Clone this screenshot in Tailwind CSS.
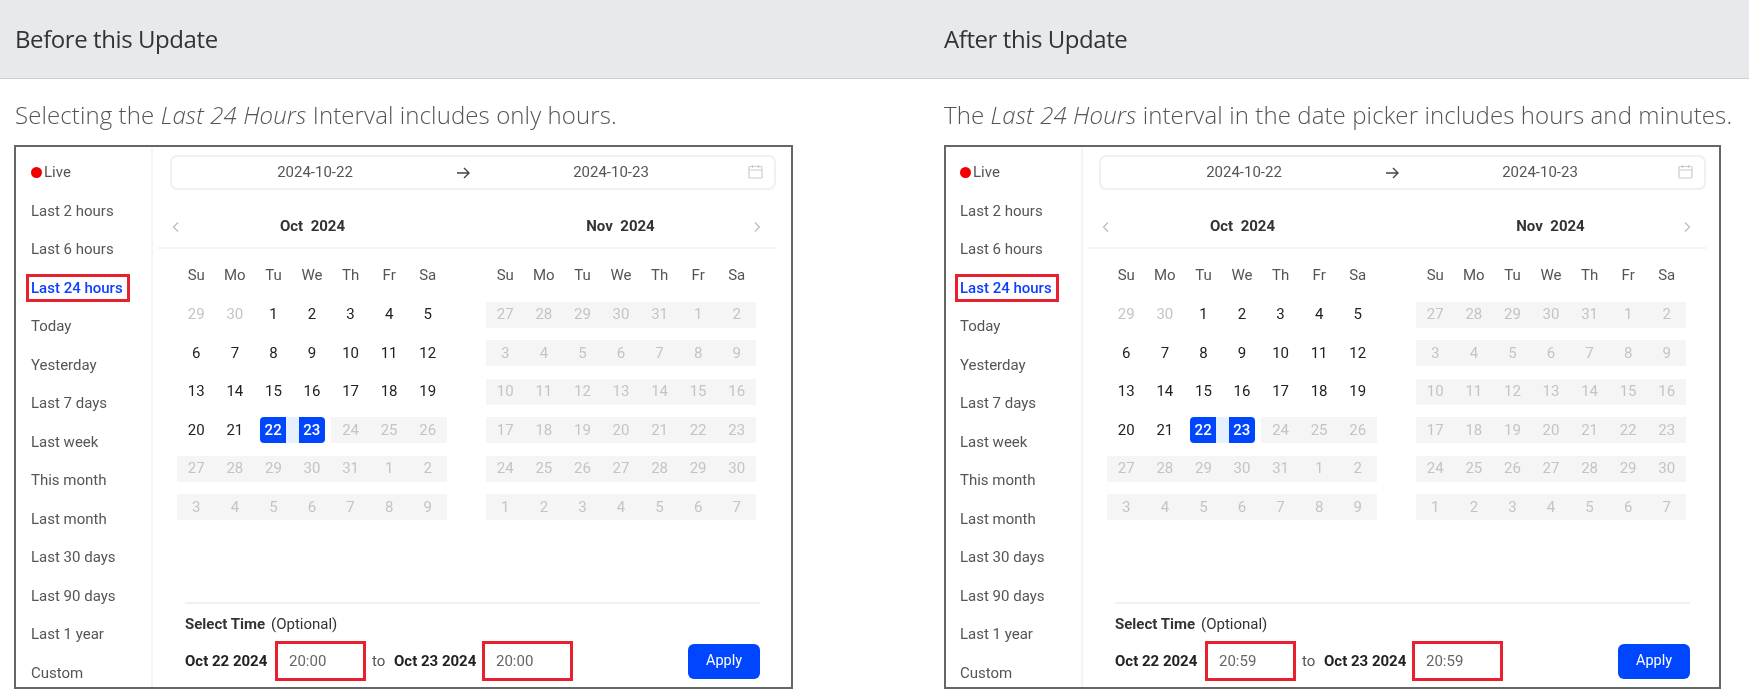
<!DOCTYPE html>
<html>
<head>
<meta charset="utf-8">
<script src="https://cdn.jsdelivr.net/npm/@tailwindcss/browser@4"></script>
</head>
<body class="bg-white overflow-hidden">
<div class="w-[1749px] h-[696px] grid grid-cols-[929px_820px] font-['Open_Sans',sans-serif] blur-[0.4px]">

<!-- BEFORE -->
<section class="flex flex-col">
  <h2 class="h-[79px] bg-[#e7e9ed] border-b border-[#cfcfcf] pl-[15px] flex items-center text-[24px] tracking-[-0.42px] text-[#333] font-normal">Before this Update</h2>
  <p class="h-[66px] pl-[15px] pt-[18px] text-[24px] leading-[36px] tracking-[0.1px] font-light text-[#555] whitespace-nowrap">Selecting the <i>Last 24 Hours</i> Interval includes only hours.</p>
  <div class="ml-[14px] w-[779px] h-[544px] border-2 border-[#666] flex overflow-hidden font-['Roboto',sans-serif] text-[15px]">
    <nav class="w-[137px] shrink-0 border-r-2 border-[#f4f4f4] pl-[15px] pt-[6px] flex flex-col text-[#555] *:h-[38.5px] *:shrink-0 *:flex *:items-center">
      <div><span class="size-[11px] rounded-full bg-[#f00000] mr-[2px]"></span>Live</div>
      <div>Last 2 hours</div>
      <div>Last 6 hours</div>
      <div class="relative font-medium text-[#0f3dff]"><span class="absolute -left-[5px] top-[5px] w-[104px] h-[28px] border-[3px] border-[#e8202f]"></span>Last 24 hours</div>
      <div>Today</div>
      <div>Yesterday</div>
      <div>Last 7 days</div>
      <div>Last week</div>
      <div>This month</div>
      <div>Last month</div>
      <div>Last 30 days</div>
      <div>Last 90 days</div>
      <div>Last 1 year</div>
      <div>Custom</div>
    </nav>
    <main class="flex-1 flex flex-col pl-[5px] pt-[8px]">
      <div class="ml-[12px] w-[606px] h-[35px] border-2 border-[#f0f0f0] rounded-[7px] grid grid-cols-[290px_1fr] items-center text-[#555] relative">
        <span class="text-center w-[286px]">2024-10-22</span>
        <span class="text-center w-[298px]">2024-10-23</span>
        <svg class="absolute left-[283px] top-[8px] size-[16px]" viewBox="0 0 16 16" fill="none" stroke="#444" stroke-width="1.4"><path d="M2 8h12M9 3l5 5-5 5"/></svg>
        <svg class="absolute right-[11px] top-[7px] size-[15px]" viewBox="0 0 15 15" fill="none" stroke="#ccc" stroke-width="1.2"><rect x="1" y="2.5" width="13" height="11.5" rx="1"/><path d="M1 6h13M4.5 1v3M10.5 1v3"/></svg>
      </div>
      <div class="relative h-[59px] border-b-2 border-[#f4f4f4] flex items-center w-[618px] font-bold text-[#333] pt-[16px]">
        <svg class="absolute left-[13px] top-[32px] size-[10px]" viewBox="0 0 10 10" fill="none" stroke="#bbb" stroke-width="1.2"><path d="M7 0.5L2.5 5 7 9.5"/></svg>
        <span class="w-[309px] text-center whitespace-pre">Oct  2024</span>
        <span class="w-[307px] text-center whitespace-pre">Nov  2024</span>
        <svg class="absolute right-[14px] top-[32px] size-[10px]" viewBox="0 0 10 10" fill="none" stroke="#bbb" stroke-width="1.2"><path d="M3 0.5L7.5 5 3 9.5"/></svg>
      </div>
      <div class="flex gap-[39px] pl-[19px]">
        <div class="w-[270px]">
          <div class="grid grid-cols-7 h-[52.5px] items-center text-center text-[#555]"><span>Su</span><span>Mo</span><span>Tu</span><span>We</span><span>Th</span><span>Fr</span><span>Sa</span></div>
          <div class="grid grid-cols-7 gap-y-[12.5px] text-[#222] *:h-[26px] *:flex *:items-center *:justify-center">
            <span class="text-[#c4c4c4]">29</span><span class="text-[#c4c4c4]">30</span><span>1</span><span>2</span><span>3</span><span>4</span><span>5</span>
            <span>6</span><span>7</span><span>8</span><span>9</span><span>10</span><span>11</span><span>12</span>
            <span>13</span><span>14</span><span>15</span><span>16</span><span>17</span><span>18</span><span>19</span>
            <span>20</span><span>21</span>
            <span class="bg-[linear-gradient(90deg,transparent_50%,#e6f0ff_50%)] relative font-medium text-white"><b class="absolute inset-y-0 left-[6px] w-[26px] rounded-l-[4px] bg-[#0046ff] flex items-center justify-center font-medium">22</b></span>
            <span class="bg-[linear-gradient(90deg,#e6f0ff_50%,transparent_50%)] relative font-medium text-white"><b class="absolute inset-y-0 left-[6px] w-[26px] rounded-r-[4px] bg-[#0046ff] flex items-center justify-center font-medium">23</b></span>
            <span class="bg-[#f5f5f5] text-[#c4c4c4]">24</span><span class="bg-[#f5f5f5] text-[#c4c4c4]">25</span><span class="bg-[#f5f5f5] text-[#c4c4c4]">26</span>
          </div>
          <div class="grid grid-cols-7 gap-y-[12.5px] mt-[12.5px] text-[#c4c4c4] *:h-[26px] *:flex *:items-center *:justify-center *:bg-[#f5f5f5]">
            <span>27</span><span>28</span><span>29</span><span>30</span><span>31</span><span>1</span><span>2</span>
            <span>3</span><span>4</span><span>5</span><span>6</span><span>7</span><span>8</span><span>9</span>
          </div>
        </div>
        <div class="w-[270px]">
          <div class="grid grid-cols-7 h-[52.5px] items-center text-center text-[#555]"><span>Su</span><span>Mo</span><span>Tu</span><span>We</span><span>Th</span><span>Fr</span><span>Sa</span></div>
          <div class="grid grid-cols-7 gap-y-[12.5px] text-[#c4c4c4] *:h-[26px] *:flex *:items-center *:justify-center *:bg-[#f5f5f5]">
            <span>27</span><span>28</span><span>29</span><span>30</span><span>31</span><span>1</span><span>2</span>
            <span>3</span><span>4</span><span>5</span><span>6</span><span>7</span><span>8</span><span>9</span>
            <span>10</span><span>11</span><span>12</span><span>13</span><span>14</span><span>15</span><span>16</span>
            <span>17</span><span>18</span><span>19</span><span>20</span><span>21</span><span>22</span><span>23</span>
            <span>24</span><span>25</span><span>26</span><span>27</span><span>28</span><span>29</span><span>30</span>
            <span>1</span><span>2</span><span>3</span><span>4</span><span>5</span><span>6</span><span>7</span>
          </div>
        </div>
      </div>
      <div class="mt-auto ml-[27px] w-[575px] border-t-2 border-[#f0f0f0] pt-[10px] pb-[6px]">
        <div class="h-[20px] flex items-center text-[#333]"><b class="font-bold mr-[6px]">Select Time</b>(Optional)</div>
        <div class="flex items-center mt-[7px] h-[40px]">
          <b class="font-bold text-[#222] w-[90px]">Oct 22 2024</b>
          <span class="w-[91px] h-[40px] border-[3px] border-[#e8202f] pl-[11px] flex items-center text-[#666]">20:00</span>
          <span class="text-[#555] ml-[6px] w-[22px]">to</span>
          <b class="font-bold text-[#222] w-[88px]">Oct 23 2024</b>
          <span class="w-[91px] h-[40px] border-[3px] border-[#e8202f] pl-[11px] flex items-center text-[#666]">20:00</span>
          <button class="ml-auto w-[72px] h-[35px] rounded-[6px] bg-[#0046ff] text-white text-[14.5px]">Apply</button>
        </div>
      </div>
    </main>
  </div>
</section>

<!-- AFTER -->
<section class="flex flex-col">
  <h2 class="h-[79px] bg-[#e7e9ed] border-b border-[#cfcfcf] pl-[15px] flex items-center text-[24px] tracking-[-0.42px] text-[#333] font-normal">After this Update</h2>
  <p class="h-[66px] pl-[15px] pt-[18px] text-[24px] leading-[36px] tracking-[0.1px] font-light text-[#555] whitespace-nowrap">The <i>Last 24 Hours</i> interval in the date picker includes hours and minutes.</p>
  <div class="ml-[15px] w-[777px] h-[544px] border-2 border-[#666] flex overflow-hidden font-['Roboto',sans-serif] text-[15px]">
    <nav class="w-[137px] shrink-0 border-r-2 border-[#f4f4f4] pl-[14px] pt-[6px] flex flex-col text-[#555] *:h-[38.5px] *:shrink-0 *:flex *:items-center">
      <div><span class="size-[11px] rounded-full bg-[#f00000] mr-[2px]"></span>Live</div>
      <div>Last 2 hours</div>
      <div>Last 6 hours</div>
      <div class="relative font-medium text-[#0f3dff]"><span class="absolute -left-[5px] top-[5px] w-[104px] h-[28px] border-[3px] border-[#e8202f]"></span>Last 24 hours</div>
      <div>Today</div>
      <div>Yesterday</div>
      <div>Last 7 days</div>
      <div>Last week</div>
      <div>This month</div>
      <div>Last month</div>
      <div>Last 30 days</div>
      <div>Last 90 days</div>
      <div>Last 1 year</div>
      <div>Custom</div>
    </nav>
    <main class="flex-1 flex flex-col pl-[5px] pt-[8px]">
      <div class="ml-[11px] w-[607px] h-[35px] border-2 border-[#f0f0f0] rounded-[7px] grid grid-cols-[290px_1fr] items-center text-[#555] relative">
        <span class="text-center w-[286px]">2024-10-22</span>
        <span class="text-center w-[298px]">2024-10-23</span>
        <svg class="absolute left-[283px] top-[8px] size-[16px]" viewBox="0 0 16 16" fill="none" stroke="#444" stroke-width="1.4"><path d="M2 8h12M9 3l5 5-5 5"/></svg>
        <svg class="absolute right-[11px] top-[7px] size-[15px]" viewBox="0 0 15 15" fill="none" stroke="#ccc" stroke-width="1.2"><rect x="1" y="2.5" width="13" height="11.5" rx="1"/><path d="M1 6h13M4.5 1v3M10.5 1v3"/></svg>
      </div>
      <div class="relative h-[59px] border-b-2 border-[#f4f4f4] flex items-center w-[618px] font-bold text-[#333] pt-[16px]">
        <svg class="absolute left-[13px] top-[32px] size-[10px]" viewBox="0 0 10 10" fill="none" stroke="#bbb" stroke-width="1.2"><path d="M7 0.5L2.5 5 7 9.5"/></svg>
        <span class="w-[309px] text-center whitespace-pre">Oct  2024</span>
        <span class="w-[307px] text-center whitespace-pre">Nov  2024</span>
        <svg class="absolute right-[14px] top-[32px] size-[10px]" viewBox="0 0 10 10" fill="none" stroke="#bbb" stroke-width="1.2"><path d="M3 0.5L7.5 5 3 9.5"/></svg>
      </div>
      <div class="flex gap-[39px] pl-[19px]">
        <div class="w-[270px]">
          <div class="grid grid-cols-7 h-[52.5px] items-center text-center text-[#555]"><span>Su</span><span>Mo</span><span>Tu</span><span>We</span><span>Th</span><span>Fr</span><span>Sa</span></div>
          <div class="grid grid-cols-7 gap-y-[12.5px] text-[#222] *:h-[26px] *:flex *:items-center *:justify-center">
            <span class="text-[#c4c4c4]">29</span><span class="text-[#c4c4c4]">30</span><span>1</span><span>2</span><span>3</span><span>4</span><span>5</span>
            <span>6</span><span>7</span><span>8</span><span>9</span><span>10</span><span>11</span><span>12</span>
            <span>13</span><span>14</span><span>15</span><span>16</span><span>17</span><span>18</span><span>19</span>
            <span>20</span><span>21</span>
            <span class="bg-[linear-gradient(90deg,transparent_50%,#e6f0ff_50%)] relative font-medium text-white"><b class="absolute inset-y-0 left-[6px] w-[26px] rounded-l-[4px] bg-[#0046ff] flex items-center justify-center font-medium">22</b></span>
            <span class="bg-[linear-gradient(90deg,#e6f0ff_50%,transparent_50%)] relative font-medium text-white"><b class="absolute inset-y-0 left-[6px] w-[26px] rounded-r-[4px] bg-[#0046ff] flex items-center justify-center font-medium">23</b></span>
            <span class="bg-[#f5f5f5] text-[#c4c4c4]">24</span><span class="bg-[#f5f5f5] text-[#c4c4c4]">25</span><span class="bg-[#f5f5f5] text-[#c4c4c4]">26</span>
          </div>
          <div class="grid grid-cols-7 gap-y-[12.5px] mt-[12.5px] text-[#c4c4c4] *:h-[26px] *:flex *:items-center *:justify-center *:bg-[#f5f5f5]">
            <span>27</span><span>28</span><span>29</span><span>30</span><span>31</span><span>1</span><span>2</span>
            <span>3</span><span>4</span><span>5</span><span>6</span><span>7</span><span>8</span><span>9</span>
          </div>
        </div>
        <div class="w-[270px]">
          <div class="grid grid-cols-7 h-[52.5px] items-center text-center text-[#555]"><span>Su</span><span>Mo</span><span>Tu</span><span>We</span><span>Th</span><span>Fr</span><span>Sa</span></div>
          <div class="grid grid-cols-7 gap-y-[12.5px] text-[#c4c4c4] *:h-[26px] *:flex *:items-center *:justify-center *:bg-[#f5f5f5]">
            <span>27</span><span>28</span><span>29</span><span>30</span><span>31</span><span>1</span><span>2</span>
            <span>3</span><span>4</span><span>5</span><span>6</span><span>7</span><span>8</span><span>9</span>
            <span>10</span><span>11</span><span>12</span><span>13</span><span>14</span><span>15</span><span>16</span>
            <span>17</span><span>18</span><span>19</span><span>20</span><span>21</span><span>22</span><span>23</span>
            <span>24</span><span>25</span><span>26</span><span>27</span><span>28</span><span>29</span><span>30</span>
            <span>1</span><span>2</span><span>3</span><span>4</span><span>5</span><span>6</span><span>7</span>
          </div>
        </div>
      </div>
      <div class="mt-auto ml-[27px] w-[575px] border-t-2 border-[#f0f0f0] pt-[10px] pb-[6px]">
        <div class="h-[20px] flex items-center text-[#333]"><b class="font-bold mr-[6px]">Select Time</b>(Optional)</div>
        <div class="flex items-center mt-[7px] h-[40px]">
          <b class="font-bold text-[#222] w-[90px]">Oct 22 2024</b>
          <span class="w-[91px] h-[40px] border-[3px] border-[#e8202f] pl-[11px] flex items-center text-[#666]">20:59</span>
          <span class="text-[#555] ml-[6px] w-[22px]">to</span>
          <b class="font-bold text-[#222] w-[88px]">Oct 23 2024</b>
          <span class="w-[91px] h-[40px] border-[3px] border-[#e8202f] pl-[11px] flex items-center text-[#666]">20:59</span>
          <button class="ml-auto w-[72px] h-[35px] rounded-[6px] bg-[#0046ff] text-white text-[14.5px]">Apply</button>
        </div>
      </div>
    </main>
  </div>
</section>
</div>
</body>
</html>
